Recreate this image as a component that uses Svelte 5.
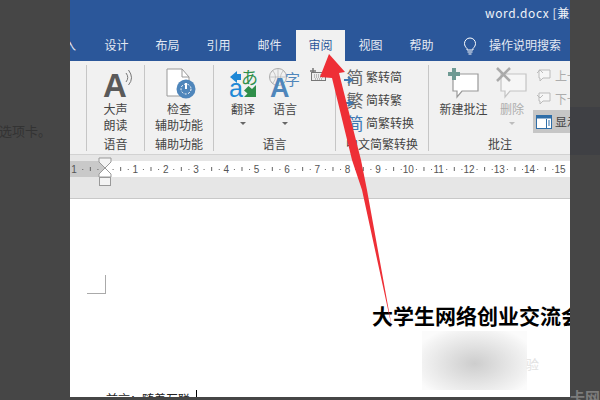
<script>
    // ruler numbers sit every 30.3px after the indent marker
    const RULER_STEP = 30.33;
    const RULER_ZERO = 35;
    const rulerNums = Array.from({ length: 15 }, (_, i) => i + 1);
    const rulerDots = Array.from({ length: 64 }, (_, i) => i);
    const tabs = ['设计', '布局', '引用', '邮件', '审阅', '视图', '帮助'];
</script>

<div class="page">
    <div class="dim dim-left"><span class="dim-text">选项卡。</span></div>

    <div class="word">
        <div class="titlebar"><span class="title">word.docx [兼容模式]</span></div>

        <div class="tabbar">
            <span class="tab-cut">入</span>
            {#each tabs as t}
                <span class="tab" class:active={t === '审阅'}>{t}</span>
            {/each}
            <svg class="bulb" width="16" height="19" viewBox="0 0 16 19">
                <path d="M5 12.500C3.500 11 2.500 9.500 2.500 7.500a5.500 5.500 0 0 1 11 0c0 2-1 3.500-2.500 5v1.500h-6z" fill="none" stroke="#fff" stroke-width="1"/>
                <path d="M5.500 16h5M6.500 18h3" stroke="#fff" stroke-width="1"/>
            </svg>
            <span class="search">操作说明搜索</span>
        </div>

        <div class="ribbon">
            <div class="group g-cut"></div>

            <div class="group g-speech">
                <div class="big">
                    <svg class="icon" width="40" height="34" viewBox="0 0 40 34">
                        <text x="7" y="31" class="a-grey">A</text>
                        <path d="M30 7q3.500 4.500 0 9M32.500 4q6 8 0 15" fill="none" stroke="#777" stroke-width="1"/>
                    </svg>
                    <span>大声</span><span>朗读</span>
                </div>
                <div class="label">语音</div>
            </div>

            <div class="group g-access">
                <div class="big">
                    <svg class="icon" width="34" height="34" viewBox="0 0 34 34">
                        <path d="M5 3h15l7 8v19H5z" fill="#fff" stroke="#999"/>
                        <path d="M20 3v8h7" fill="none" stroke="#999"/>
                        <circle cx="24" cy="23" r="9.500" fill="#4f86bb"/>
                        <circle cx="24" cy="23" r="5" fill="none" stroke="#fff" stroke-width="1" stroke-dasharray="2 1.500"/>
                        <path d="M24 17v6" stroke="#fff" stroke-width="2"/>
                    </svg>
                    <span>检查</span><span>辅助功能</span>
                </div>
                <div class="label">辅助功能</div>
            </div>

            <div class="group g-lang">
                <div class="g-row">
                    <div class="big w-translate">
                        <svg class="icon" width="30" height="34" viewBox="0 0 30 34">
                            <path d="M2 11l7-6v3h4v6H9v3z" fill="#1e88d6"/>
                            <text x="13" y="18" class="glyph-green">あ</text>
                            <text x="1" y="31" class="glyph-blue">a</text>
                            <path d="M28 19v12H16l3.500-3.500-3.500-3 4.500-4.500 3.500 3z" fill="#2f8f4a"/>
                        </svg>
                        <span>翻译</span>
                        <i class="caret"></i>
                    </div>
                    <div class="big w-language">
                        <svg class="icon" width="36" height="34" viewBox="0 0 36 34">
                            <circle cx="11" cy="11" r="8.500" fill="none" stroke="#aaa"/>
                            <path d="M2.500 11h17M11 2.500v17M6 5q5 6 0 12M16 5q-5 6 0 12" fill="none" stroke="#bbb" stroke-width="0.800"/>
                            <text x="3" y="31" class="a-blue">A</text>
                            <text x="18" y="19" class="glyph-zi">字</text>
                        </svg>
                        <span>语言</span>
                        <i class="caret"></i>
                    </div>
                    <svg class="kbd" width="16" height="14" viewBox="0 0 16 14">
                        <path d="M3 0v6M0 3h6" stroke="#777" stroke-width="1.500"/>
                        <rect x="1.500" y="4.500" width="14" height="8" fill="#eee" stroke="#777"/>
                        <path d="M4 7h9M4 9h9M5 11h7" stroke="#888" stroke-dasharray="1 1"/>
                    </svg>
                </div>
                <div class="label">语言</div>
            </div>

            <div class="group g-chinese">
                <div class="rows">
                    <div class="row"><span class="char-icon">简<svg class="mini-arrow" width="10" height="8" viewBox="0 0 10 8"><path d="M0 4h6M4 1l4 3-4 3" fill="none" stroke="#3d78b3" stroke-width="2"/></svg></span>繁转简</div>
                    <div class="row"><span class="char-icon">繁<svg class="mini-arrow" width="10" height="8" viewBox="0 0 10 8"><path d="M0 4h6M4 1l4 3-4 3" fill="none" stroke="#3d78b3" stroke-width="2"/></svg></span>简转繁</div>
                    <div class="row"><span class="char-icon blue">简</span>简繁转换</div>
                </div>
                <div class="label">中文简繁转换</div>
            </div>

            <div class="group g-comment">
                <div class="g-row">
                    <div class="big w-new">
                        <svg class="icon" width="32" height="34" viewBox="0 0 32 34">
                            <path d="M5 8h25v17H14l-5 6v-6H5z" fill="#fff" stroke="#999" stroke-width="1.200"/>
                            <path d="M6 2v12M0 8h12" stroke="#6f9a94" stroke-width="4"/>
                        </svg>
                        <span>新建批注</span>
                    </div>
                    <div class="big w-del muted">
                        <svg class="icon" width="32" height="34" viewBox="0 0 32 34">
                            <path d="M5 8h25v17H14l-5 6v-6H5z" fill="#f6f6f6" stroke="#c4c4c4" stroke-width="1.200"/>
                            <path d="M1 2l13 13M14 2L1 15" stroke="#aaa" stroke-width="2.500"/>
                        </svg>
                        <span>删除</span>
                        <i class="caret pale"></i>
                    </div>
                    <div class="side">
                        <div class="side-row muted"><svg width="16" height="15" viewBox="0 0 16 15"><path d="M3 2h11v8H7l-3 3v-3H3z" fill="#f6f6f6" stroke="#bbb"/><path d="M1 5l3-3 3 3" fill="none" stroke="#bbb"/></svg>上一条</div>
                        <div class="side-row muted"><svg width="16" height="15" viewBox="0 0 16 15"><path d="M3 2h11v8H7l-3 3v-3H3z" fill="#f6f6f6" stroke="#bbb"/><path d="M1 4l3 3 3-3" fill="none" stroke="#bbb"/></svg>下一条</div>
                        <div class="side-row show"><svg width="16" height="14" viewBox="0 0 16 14"><rect x="0.500" y="0.500" width="15" height="13" fill="#fff" stroke="#2f6ea8"/><rect x="0.500" y="0.500" width="15" height="3" fill="#2f6ea8"/><path d="M10.500 4v9M12 6h2M12 8h2M12 10h2" stroke="#2f6ea8"/></svg>显示批注</div>
                    </div>
                </div>
                <div class="label label-comment">批注</div>
            </div>
        </div>

        <div class="ruler-zone">
            <svg class="ruler" width="500" height="30" viewBox="0 0 500 30">
                <rect x="0" y="0" width="500" height="16" fill="#fff"/>
                <rect x="0" y="0" width="35" height="16" fill="#c9c9c9"/>
                <text x="4" y="12" class="rnum" text-anchor="middle">1</text>
                {#each rulerDots as d}
                    {#if d % 4 === 1 || d % 4 === 3}
                        <rect x={RULER_ZERO - 30.33 + d * RULER_STEP / 4} y="8" width="1" height="1" fill="#666"/>
                    {:else if d % 4 === 2}
                        <rect x={RULER_ZERO - 30.33 + d * RULER_STEP / 4} y="6" width="1" height="4" fill="#666"/>
                    {/if}
                {/each}
                {#each rulerNums as n}
                    <text x={RULER_ZERO + n * RULER_STEP} y="12" class="rnum" text-anchor="middle">{n}</text>
                {/each}
                <path d="M29 -3h12v4l-6 6-6-6z" fill="#f4f4f4" stroke="#999"/>
                <path d="M35 7l6 6v3h-12v-3z" fill="#fff" stroke="#999"/>
                <rect x="29.500" y="16.500" width="11" height="8" fill="#f4f4f4" stroke="#999"/>
            </svg>
        </div>

        <div class="doc">
            <div class="corner"></div>
            <div class="heading">大学生网络创业交流会</div>
            <div class="line">前言：随着互联<i class="cursor"></i></div>
        </div>
    </div>

    <div class="dim dim-right">
        <div class="dim-band"></div>
        <div class="dim-site">卡网</div>
    </div>

    <!-- watermark smudge and red arrow lie over the screenshot -->
    <div class="smudge"></div>
    <span class="wm">验</span>
    <svg class="arrow" width="600" height="400" viewBox="0 0 600 400">
        <polygon points="329,54 345,72 339,73 361,160 367,190 392,328 362,190 352,160 332,78 320,77" fill="#ee2f36"/>
    </svg>
</div>

<style>
    :global(body) {
        margin: 0;
    }

    .page {
        position: relative;
        display: flex;
        width: 600px;
        height: 400px;
        overflow: hidden;
        background: #464646;
        font-family: "Noto Sans CJK SC", "Liberation Sans", sans-serif;
        font-size: 12px;
        color: #444;
    }

    .dim {
        flex: none;
        color: #333;
    }

    .dim-left {
        width: 70px;
        padding-top: 121px;
        box-sizing: border-box;
        overflow: hidden;
        font-size: 13px;
        white-space: nowrap;
    }

    .dim-text {
        display: block;
        margin-left: -1px;
    }

    .dim-right {
        width: 30px;
        display: flex;
        flex-direction: column;
    }

    .dim-band {
        margin-top: 107px;
        height: 48px;
        background: #3f4044;
    }

    .dim-site {
        margin-top: auto;
        height: 14px;
        line-height: 22px;
        overflow: hidden;
        font-size: 15px;
        font-weight: 700;
        color: #7c7c7c;
    }

    .word {
        flex: none;
        width: 500px;
        height: 397px;
        display: flex;
        flex-direction: column;
        overflow: hidden;
        background: #fff;
    }

    .titlebar {
        flex: none;
        height: 30px;
        background: #2b579a;
        color: #eef2f8;
        overflow: hidden;
        white-space: nowrap;
    }

    .title {
        display: block;
        margin-left: 415px;
        line-height: 25px;
        font-size: 12px;
        letter-spacing: 0.6px;
    }

    .tabbar {
        flex: none;
        height: 31px;
        display: flex;
        align-items: stretch;
        background: #2b579a;
        color: #e3e9f3;
        white-space: nowrap;
    }

    .tab-cut {
        width: 21px;
        line-height: 29px;
        margin-left: -6px;
        flex: none;
        padding-right: 6px;
    }

    .tab {
        flex: none;
        width: 51px;
        text-align: center;
        line-height: 29px;
    }

    .tab.active {
        width: 49px;
        margin-left: 1px;
        background: #f1f1f1;
        color: #2b579a;
    }

    .bulb {
        flex: none;
        margin: 6px 0 0 15px;
    }

    .search {
        margin-left: 11px;
        line-height: 29px;
    }

    .ribbon {
        flex: none;
        height: 94px;
        display: flex;
        box-sizing: border-box;
        padding-top: 4px;
        background: #f1f1f1;
        border-bottom: 1px solid #d2d2d2;
        line-height: 16px;
    }

    .group {
        flex: none;
        box-sizing: border-box;
        height: 86px;
        display: flex;
        flex-direction: column;
        border-right: 1px solid #c6c6c6;
    }

    .g-cut { width: 17px; }
    .g-speech { width: 58px; }
    .g-access { width: 69px; }
    .g-lang { width: 122px; }
    .g-chinese { width: 93px; }
    .g-comment { width: 200px; border-right: none; }

    .label {
        margin-top: auto;
        margin-bottom: -1px;
        text-align: center;
        white-space: nowrap;
    }

    .label-comment {
        width: 142px;
    }

    .big {
        display: flex;
        flex-direction: column;
        align-items: center;
        white-space: nowrap;
    }

    .icon {
        display: block;
        flex: none;
        margin: 1px 0;
    }

    .g-row {
        display: flex;
    }

    .w-translate { width: 58px; flex: none; }
    .w-language { width: 42px; flex: none; margin-left: -8px; }
    .kbd { margin: 3px 0 0 4px; flex: none; }

    .w-new { width: 69px; flex: none; }
    .w-del { width: 28px; flex: none; margin-right: 10px; }

    .muted { color: #adadad; }

    .caret {
        display: block;
        width: 0;
        height: 0;
        margin-top: 5px;
        border: 3px solid transparent;
        border-top: 3px solid #666;
        border-bottom: none;
    }

    .caret.pale { border-top-color: #bdbdbd; }

    .rows {
        display: flex;
        flex-direction: column;
        gap: 5px;
        padding-top: 3px;
        padding-left: 10px;
    }

    .row {
        display: flex;
        align-items: center;
        height: 18px;
        white-space: nowrap;
    }

    .char-icon {
        position: relative;
        flex: none;
        width: 18px;
        margin-right: 2px;
        font-size: 17px;
        color: #666;
        text-align: center;
    }

    .char-icon.blue { color: #3d78b3; }

    .mini-arrow {
        position: absolute;
        left: -2px;
        bottom: 1px;
    }

    .side {
        display: flex;
        flex-direction: column;
        gap: 6px;
        padding-top: 2px;
    }

    .side-row {
        display: flex;
        align-items: center;
        gap: 3px;
        height: 17px;
        white-space: nowrap;
    }

    .side-row svg {
        flex: none;
    }

    .show {
        height: 23px;
        width: 60px;
        margin: -3px 0 0 -3px;
        padding-left: 3px;
        background: #c6c6c6;
        color: #444;
    }

    .ruler-zone {
        flex: none;
        height: 44px;
        box-sizing: border-box;
        padding-top: 6px;
        background: #e6e6e6;
        border-bottom: 1px solid #c8c8c8;
    }

    .ruler {
        display: block;
        overflow: visible;
    }

    .rnum {
        font-family: "Liberation Sans", sans-serif;
        font-size: 10px;
        fill: #555;
    }

    .a-grey {
        font-family: "Liberation Sans", sans-serif;
        font-weight: 700;
        font-size: 33px;
        fill: #5a5a5a;
    }

    .a-blue {
        font-family: "Liberation Sans", sans-serif;
        font-weight: 700;
        font-size: 27px;
        fill: #4f86bb;
    }

    .glyph-green {
        font-size: 17px;
        fill: #2f8f4a;
    }

    .glyph-blue {
        font-family: "Liberation Sans", sans-serif;
        font-size: 25px;
        fill: #1e88d6;
    }

    .glyph-zi {
        font-size: 15px;
        fill: #4f86bb;
    }

    .doc {
        flex: 1;
        min-height: 0;
        overflow: hidden;
        color: #000;
    }

    .corner {
        width: 18px;
        height: 18px;
        margin: 76px 0 0 17px;
        border-right: 1px solid #aaa;
        border-bottom: 1px solid #aaa;
    }

    .heading {
        margin: 9px 0 0 302px;
        height: 24px;
        line-height: 24px;
        font-size: 21px;
        font-weight: 700;
        white-space: nowrap;
    }

    .line {
        margin: 63px 0 0 36px;
        line-height: 16px;
        white-space: nowrap;
        color: #222;
    }

    .cursor {
        display: inline-block;
        width: 1px;
        height: 14px;
        margin-left: 6px;
        background: #000;
    }

    .smudge {
        position: absolute;
        left: 422px;
        top: 331px;
        width: 105px;
        height: 59px;
        background: radial-gradient(ellipse 60% 65% at 50% 55%, #cdcdcd, #f3f3f3 85%, #fbfbfb);
    }

    .wm {
        position: absolute;
        left: 526px;
        top: 354px;
        font-size: 13px;
        color: #e2e2e2;
    }

    .arrow {
        position: absolute;
        left: 0;
        top: 0;
        pointer-events: none;
    }
</style>
